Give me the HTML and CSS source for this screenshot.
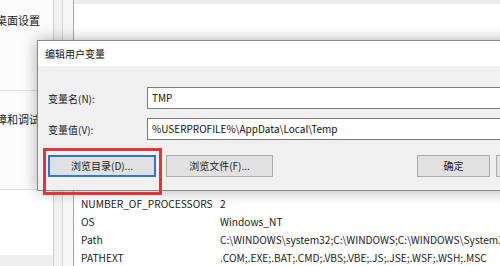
FILE: index.html
```html
<!DOCTYPE html>
<html lang="zh-CN">
<head>
<meta charset="utf-8">
<title>编辑用户变量</title>
<link rel="stylesheet" href="styles.css">
</head>
<body>
<div class="desk">
  <div class="side">
    <div class="side-item first"><span class="side-text">桌面设置</span></div>
    <div class="side-item second"><span class="side-text">障和调试</span></div>
    <div class="side-fill"></div>
    <div class="side-foot"></div>
  </div>
  <div class="rail rail-a"></div>
  <div class="rail rail-b"></div>
  <div class="main">
    <div class="main-top"></div>
    <div class="main-blank"></div>
    <div class="list">
      <div class="list-row"><span class="col-name">NUMBER_OF_PROCESSORS</span><span class="col-val">2</span></div>
      <div class="list-row"><span class="col-name">OS</span><span class="col-val">Windows_NT</span></div>
      <div class="list-row"><span class="col-name">Path</span><span class="col-val">C:\WINDOWS\system32;C:\WINDOWS;C:\WINDOWS\System32\Wbem</span></div>
      <div class="list-row"><span class="col-name">PATHEXT</span><span class="col-val">.COM;.EXE;.BAT;.CMD;.VBS;.VBE;.JS;.JSE;.WSF;.WSH;.MSC</span></div>
    </div>
  </div>
</div>

<div class="dialog">
  <div class="dialog-title">编辑用户变量</div>
  <div class="dialog-body">
    <div class="field">
      <label class="field-label">变量名(N):</label>
      <div class="field-input">TMP</div>
    </div>
    <div class="field">
      <label class="field-label">变量值(V):</label>
      <div class="field-input">%USERPROFILE%\AppData\Local\Temp</div>
    </div>
    <div class="buttons">
      <div class="btn-group">
        <div class="btn btn-focus">浏览目录(D)...</div>
        <div class="btn">浏览文件(F)...</div>
      </div>
      <div class="btn-group right">
        <div class="btn btn-small">确定</div>
        <div class="btn btn-small">取消</div>
      </div>
    </div>
  </div>
</div>

<div class="highlight"></div>
</body>
</html>
```
FILE: styles.css
```css
html, body {
  margin: 0;
  padding: 0;
}
body {
  width: 500px;
  height: 266px;
  overflow: hidden;
  position: relative;
  background: #ffffff;
  font-family: "Noto Sans CJK SC", "Noto Sans", sans-serif;
  font-size: 10px;
  color: #1a1a1a;
}
.desk {
  display: flex;
  height: 266px;
}
.side {
  width: 53px;
  display: flex;
  flex-direction: column;
  overflow: hidden;
  background: #fbfbfb;
}
.side-item {
  border-bottom: 1px solid #e2e2e2;
  box-sizing: border-box;
  white-space: nowrap;
}
.side-item.first {
  height: 91px;
  padding-top: 12px;
}
.side-item.second {
  height: 99px;
  padding-top: 20px;
}
.side-text {
  display: block;
  margin-left: -4px;
  font-size: 11px;
  line-height: 16px;
}
.side-fill {
  flex: 1;
  background: #ffffff;
}
.side-foot {
  height: 11px;
  background: #eeeeee;
}
.rail {
  box-sizing: border-box;
}
.rail-a {
  width: 10px;
  background: #f2f2f2;
  border-left: 1px solid #cfcfcf;
  border-right: 1px solid #d6d6d6;
}
.rail-b {
  width: 11px;
  background: #f7f7f7;
  border-right: 1px solid #a9a9a9;
}
.main {
  flex: 1;
  display: flex;
  flex-direction: column;
  min-width: 0;
}
.main-top {
  height: 4px;
  background: #ececec;
}
.main-blank {
  flex: 1;
}
.list {
  padding: 0 0 0 7px;
  height: 71px;
  overflow: hidden;
  font-size: 10.2px;
}
.list-row {
  display: flex;
  height: 18px;
  line-height: 18px;
  white-space: nowrap;
  color: #222;
}
.col-name {
  width: 139px;
  flex: none;
}
.col-val {
  flex: none;
}
.dialog {
  position: absolute;
  left: 37px;
  top: 40px;
  width: 543px;
  height: 151px;
  box-sizing: border-box;
  border: 1px solid #8a8a8a;
  background: #f0f0f0;
  box-shadow: 0 0 14px rgba(0, 0, 0, 0.32);
  display: flex;
  flex-direction: column;
}
.dialog-title {
  height: 25px;
  line-height: 25px;
  background: #ffffff;
  padding-left: 7px;
  color: #111;
}
.dialog-body {
  flex: 1;
  padding: 21px 10px 0 10px;
  display: flex;
  flex-direction: column;
  gap: 9px;
}
.field {
  display: flex;
  align-items: center;
}
.field-label {
  width: 99px;
  flex: none;
}
.field-input {
  flex: 1;
  height: 22px;
  box-sizing: border-box;
  border: 1px solid #7a7a7a;
  background: #ffffff;
  line-height: 20px;
  padding-left: 4px;
  white-space: nowrap;
  color: #111;
}
.buttons {
  display: flex;
  justify-content: space-between;
  margin-top: 6px;
}
.btn-group {
  display: flex;
  gap: 10px;
}
.btn-group.right {
  gap: 6px;
}
.btn {
  width: 107px;
  height: 22px;
  box-sizing: border-box;
  border: 1px solid #adadad;
  background: #e1e1e1;
  text-align: center;
  line-height: 20px;
  color: #222;
}
.btn-focus {
  width: 108px;
  border: 2px solid #2b79c9;
  line-height: 18px;
}
.btn-small {
  width: 73px;
}
.highlight {
  position: absolute;
  left: 43px;
  top: 148px;
  width: 119px;
  height: 47px;
  box-sizing: border-box;
  border: 3px solid #e2353b;
}
```
